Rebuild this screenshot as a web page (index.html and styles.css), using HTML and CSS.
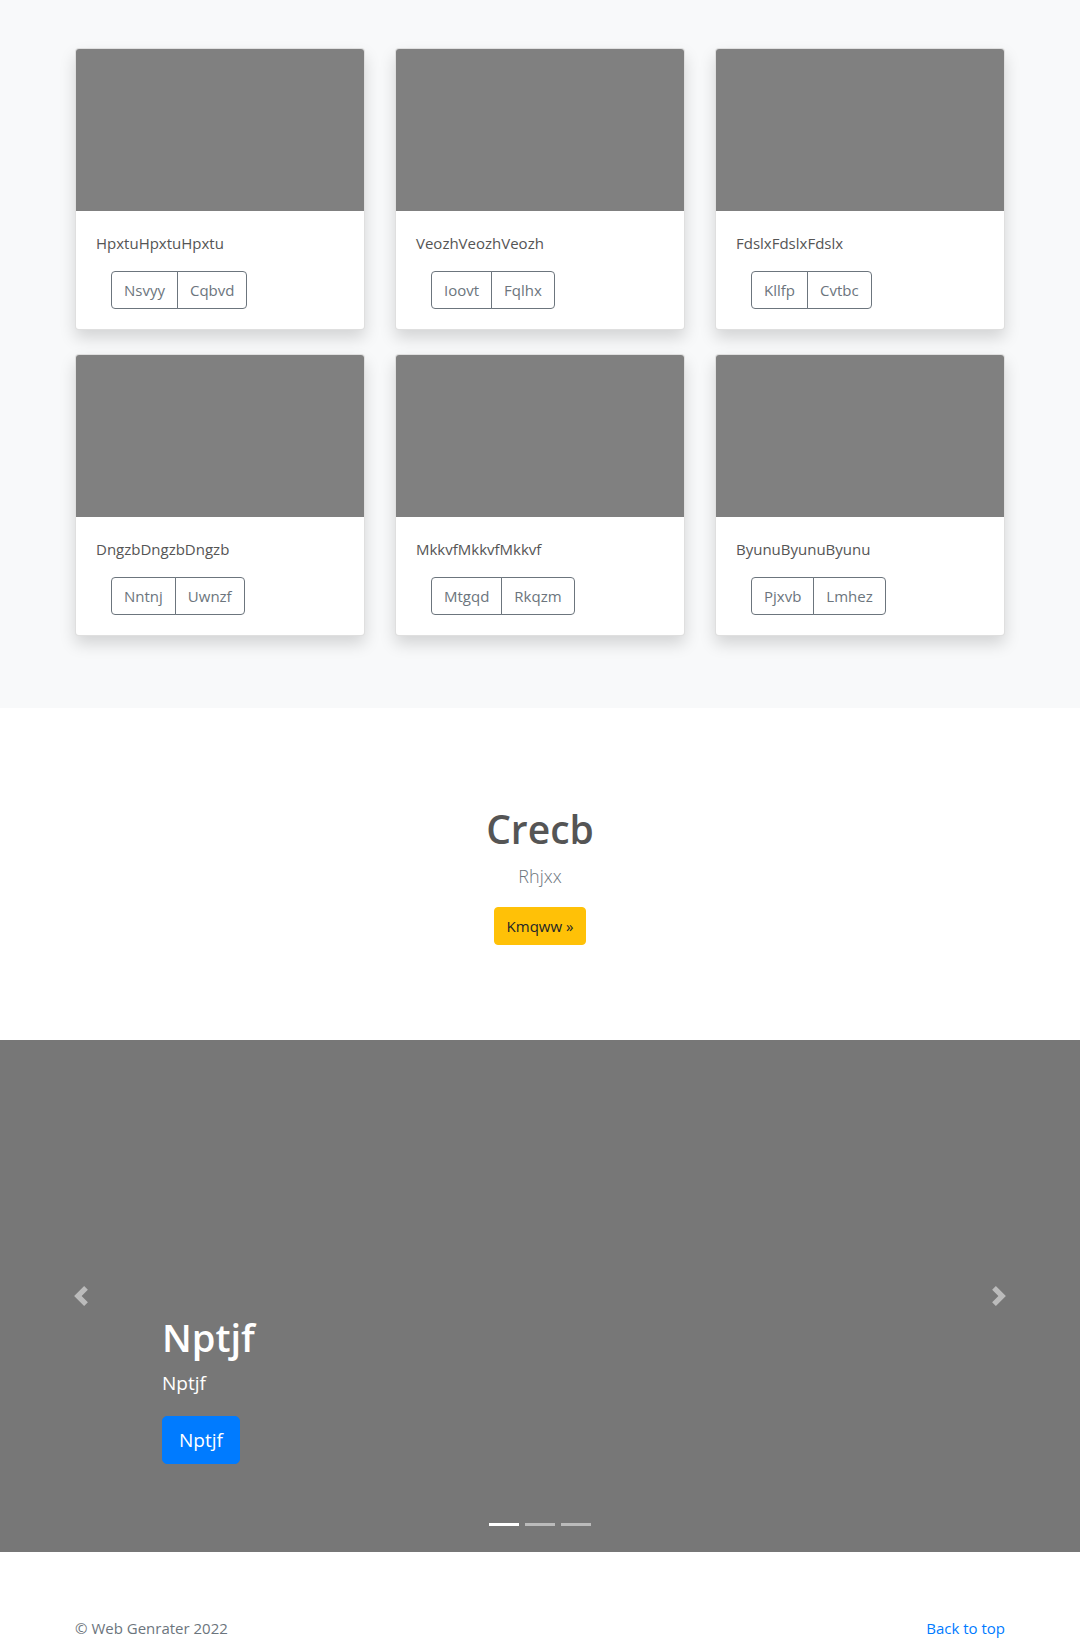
FILE: index.html
```html
<!DOCTYPE html>
<html lang="en">
<head>
<meta charset="utf-8">
<title>Album</title>
<link rel="stylesheet" href="styles.css">
</head>
<body>
<main>
  <section class="album">
    <div class="container">
      <div class="grid">
        <div class="card">
          <div class="card-img"></div>
          <div class="card-body">
            <p class="card-text">HpxtuHpxtuHpxtu</p>
            <div class="btn-row"><div class="btn-group"><button class="btn">Nsvyy</button><button class="btn">Cqbvd</button></div></div>
          </div>
        </div>
        <div class="card">
          <div class="card-img"></div>
          <div class="card-body">
            <p class="card-text">VeozhVeozhVeozh</p>
            <div class="btn-row"><div class="btn-group"><button class="btn">Ioovt</button><button class="btn">Fqlhx</button></div></div>
          </div>
        </div>
        <div class="card">
          <div class="card-img"></div>
          <div class="card-body">
            <p class="card-text">FdslxFdslxFdslx</p>
            <div class="btn-row"><div class="btn-group"><button class="btn">Kllfp</button><button class="btn">Cvtbc</button></div></div>
          </div>
        </div>
        <div class="card">
          <div class="card-img"></div>
          <div class="card-body">
            <p class="card-text">DngzbDngzbDngzb</p>
            <div class="btn-row"><div class="btn-group"><button class="btn">Nntnj</button><button class="btn">Uwnzf</button></div></div>
          </div>
        </div>
        <div class="card">
          <div class="card-img"></div>
          <div class="card-body">
            <p class="card-text">MkkvfMkkvfMkkvf</p>
            <div class="btn-row"><div class="btn-group"><button class="btn">Mtgqd</button><button class="btn">Rkqzm</button></div></div>
          </div>
        </div>
        <div class="card">
          <div class="card-img"></div>
          <div class="card-body">
            <p class="card-text">ByunuByunuByunu</p>
            <div class="btn-row"><div class="btn-group"><button class="btn">Pjxvb</button><button class="btn">Lmhez</button></div></div>
          </div>
        </div>
      </div>
    </div>
  </section>

  <section class="hero">
    <div class="container">
      <h1 class="hero-title">Crecb</h1>
      <p class="lead">Rhjxx</p>
      <p class="hero-actions"><a class="btn-warning" href="#">Kmqww »</a></p>
    </div>
  </section>

  <div class="carousel">
    <div class="slide">
      <div class="carousel-caption">
        <h1 class="caption-title">Nptjf</h1>
        <p class="caption-text">Nptjf</p>
        <p class="caption-actions"><a class="btn-primary" href="#">Nptjf</a></p>
      </div>
    </div>
    <ol class="indicators">
      <li class="active"></li>
      <li></li>
      <li></li>
    </ol>
    <a class="control control-prev" href="#">
      <svg class="control-icon" viewBox="0 0 8 8" width="20" height="20"><path fill="#fff" d="M5.25 0l-4 4 4 4 1.5-1.5L4.25 4l2.5-2.5L5.25 0z"/></svg>
    </a>
    <a class="control control-next" href="#">
      <svg class="control-icon" viewBox="0 0 8 8" width="20" height="20"><path fill="#fff" d="M2.75 0l-1.5 1.5L3.75 4l-2.5 2.5L2.75 8l4-4-4-4z"/></svg>
    </a>
  </div>
</main>

<footer class="footer">
  <div class="container footer-inner">
    <p class="copy">© Web Genrater 2022</p>
    <p class="back"><a href="#">Back to top</a></p>
  </div>
</footer>
</body>
</html>
```

FILE: styles.css
```css
* { box-sizing: border-box; }
html, body { margin: 0; padding: 0; }
body {
  font-family: "Open Sans", "Noto Sans", "Liberation Sans", sans-serif;
  font-size: 15px;
  line-height: 1.5;
  color: #212529;
  background: #fff;
}
p { margin: 0; }
a { text-decoration: none; }

.container {
  width: 960px;
  margin: 0 auto;
  padding: 0 15px;
}

/* Album */
.album {
  background: #f8f9fa;
  padding: 48px 0 72px;
}
.grid {
  display: grid;
  grid-template-columns: repeat(3, 290px);
  column-gap: 30px;
  row-gap: 24px;
}
.card {
  background: #fff;
  border: 1px solid rgba(0,0,0,.125);
  border-radius: 4px;
  box-shadow: 0 8px 16px rgba(0,0,0,.15);
  overflow: hidden;
}
.card-img {
  height: 162px;
  background: #808080;
}
.card-body {
  padding: 20px;
}
.card-text {
  color: #555;
  line-height: 24px;
  margin-bottom: 16px;
}
.btn-row {
  padding-left: 15px;
}
.btn-group {
  display: inline-flex;
}
.btn {
  font-family: inherit;
  font-size: 15px;
  line-height: 24px;
  padding: 6px 12px;
  color: #6c757d;
  background: transparent;
  border: 1px solid #6c757d;
  border-radius: 0;
  cursor: pointer;
}
.btn:first-child { border-radius: 4px 0 0 4px; }
.btn:last-child { border-radius: 0 4px 4px 0; margin-left: -1px; }

/* Hero */
.hero {
  background: #fff;
  text-align: center;
  padding: 98px 0 79px;
}
.hero-title {
  margin: 0;
  font-size: 39px;
  font-weight: 600;
  line-height: 1.2;
  color: #555;
}
.lead {
  font-size: 18px;
  font-weight: 300;
  line-height: 30px;
  color: #6c757d;
  margin: 8px 0 16px;
}
.hero-actions { margin-bottom: 16px; }
.btn-warning {
  display: inline-block;
  background: #ffc107;
  color: #212529;
  border: 1px solid #ffc107;
  border-radius: 4px;
  padding: 6px 12px;
  font-size: 15px;
  line-height: 24px;
}

/* Carousel */
.carousel {
  position: relative;
  height: 512px;
  background: #777;
  margin-bottom: 64px;
}
.slide { height: 100%; }
.carousel-caption {
  position: absolute;
  left: 15%;
  right: 15%;
  bottom: 68px;
  padding: 20px 0;
  color: #fff;
  z-index: 10;
}
.caption-title {
  margin: 0 0 7px;
  font-size: 38px;
  font-weight: 600;
  line-height: 1.2;
}
.caption-text {
  font-size: 19px;
  line-height: 30px;
  margin-bottom: 18px;
}
.btn-primary {
  display: inline-block;
  background: #007bff;
  color: #fff;
  border: 1px solid #007bff;
  border-radius: 5px;
  padding: 8px 16px;
  font-size: 19px;
  line-height: 30px;
}
.indicators {
  position: absolute;
  left: 0;
  right: 0;
  bottom: 0;
  margin: 0 15% 16px;
  padding: 0;
  list-style: none;
  display: flex;
  justify-content: center;
  z-index: 15;
}
.indicators li {
  box-sizing: content-box;
  width: 30px;
  height: 3px;
  margin: 0 3px;
  background: #fff;
  background-clip: padding-box;
  border-top: 10px solid transparent;
  border-bottom: 10px solid transparent;
  opacity: .5;
}
.indicators li.active { opacity: 1; }
.control {
  position: absolute;
  top: 0;
  bottom: 0;
  width: 15%;
  display: flex;
  align-items: center;
  justify-content: center;
  opacity: .5;
  z-index: 5;
}
.control-prev { left: 0; }
.control-next { right: 0; }
.control-icon { display: block; }

/* Footer */
.footer {
  color: #6c757d;
  padding-bottom: 48px;
}
.footer-inner {
  display: flex;
  justify-content: space-between;
  line-height: 24px;
}
.back a { color: #007bff; }
```
